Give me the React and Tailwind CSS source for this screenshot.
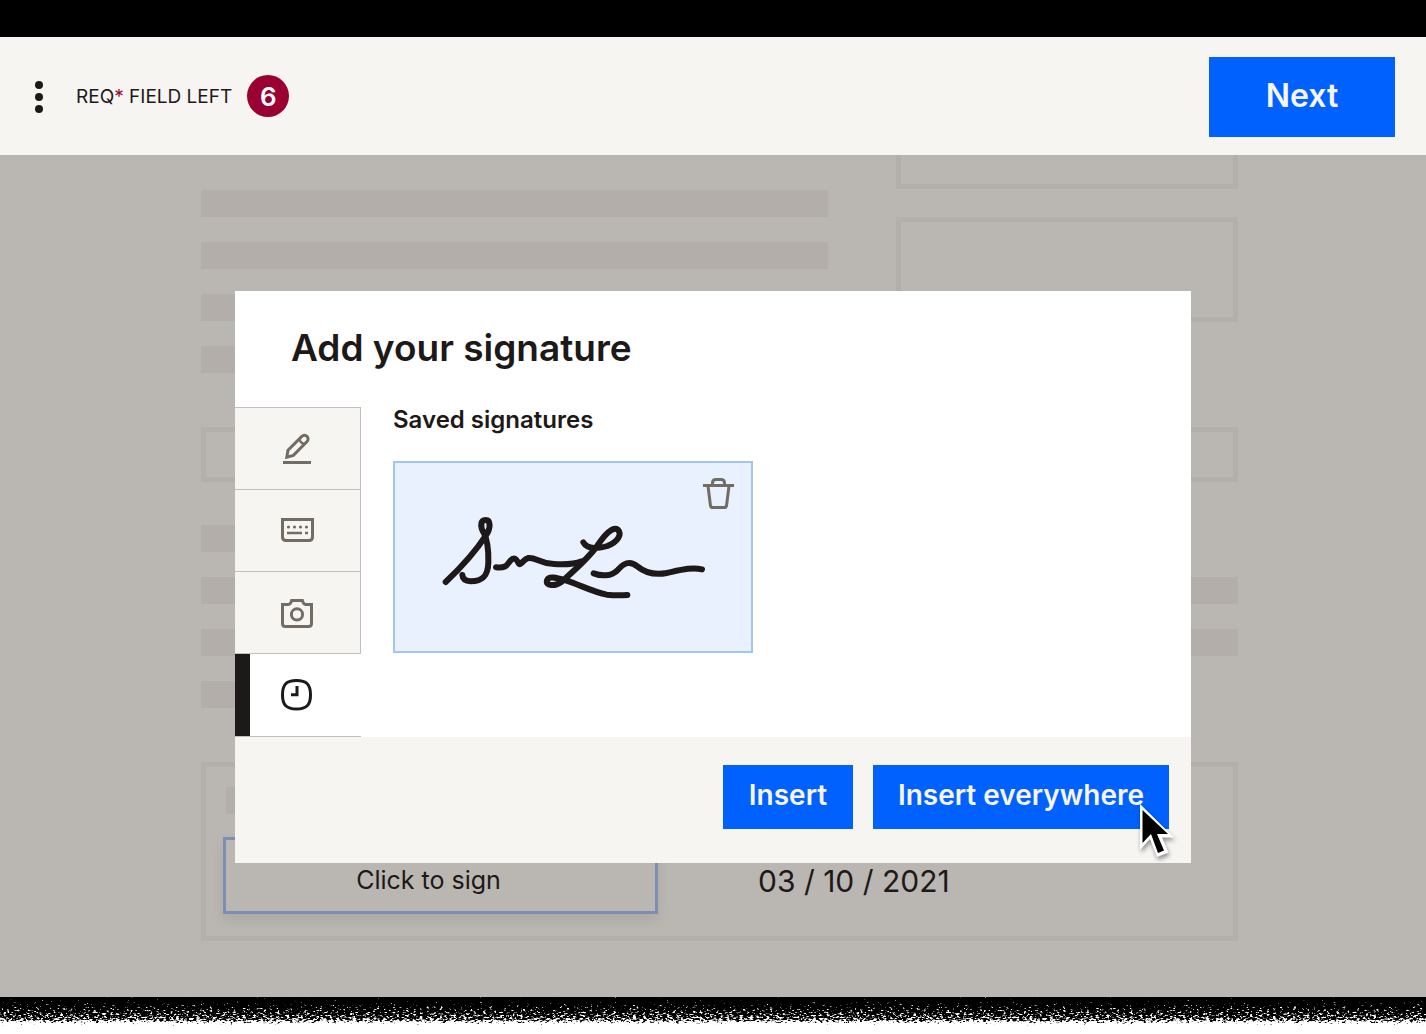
import { useState } from 'react';

const TABS = [
  { id: 'draw', label: 'Draw', Icon: PencilIcon },
  { id: 'type', label: 'Type', Icon: KeyboardIcon },
  { id: 'photo', label: 'Photo', Icon: CameraIcon },
  { id: 'saved', label: 'Saved signatures', Icon: ClockIcon },
];

function PencilIcon() {
  return (
    <svg viewBox="0 0 34 34" className="w-[34px] h-[34px]" fill="none" stroke="currentColor" strokeWidth="3" aria-hidden="true">
      <path d="M3 30.5H31" />
      <path d="M6.8 25.2L8 18.2L21.6 4.6C23.4 2.8 25.6 3 27 4.4C28.4 5.8 28.6 8 26.8 9.8L13.4 23.4Z" />
      <path d="M19.4 7C20 10 21.4 11.4 24.6 12" strokeWidth="2.4" />
    </svg>
  );
}

function KeyboardIcon() {
  return (
    <svg viewBox="0 0 34 34" className="w-[34px] h-[34px]" fill="none" stroke="currentColor" strokeWidth="3" aria-hidden="true">
      <path d="M2.5 5.5H32.5V23C32.5 25.2 31.4 26.5 29 26.5H6C3.6 26.5 2.5 25.2 2.5 23Z" />
      <path d="M7 19H22M25 19H28" strokeWidth="2.6" />
      <g fill="currentColor" stroke="none">
        <circle cx="8.5" cy="13" r="1.6" />
        <circle cx="14.5" cy="13" r="1.6" />
        <circle cx="20.5" cy="13" r="1.6" />
        <circle cx="26.5" cy="13" r="1.6" />
      </g>
    </svg>
  );
}

function CameraIcon() {
  return (
    <svg viewBox="0 0 34 34" className="w-[34px] h-[34px]" fill="none" stroke="currentColor" strokeWidth="3" aria-hidden="true">
      <path d="M2.5 8.5H8.5C10.6 8.5 11 7 11.6 4.5H22.4C23 7 23.4 8.5 25.5 8.5H31.5V27.5C31.5 29.6 30.6 30.5 28.5 30.5H5.5C3.4 30.5 2.5 29.6 2.5 27.5Z" />
      <circle cx="17" cy="18.4" r="5.6" />
    </svg>
  );
}

function ClockIcon() {
  return (
    <svg viewBox="0 0 34 34" className="w-[34px] h-[34px]" fill="none" stroke="currentColor" strokeWidth="3" aria-hidden="true">
      <path d="M16.5 2.5C26.5 2.5 30.5 6.5 30.5 17C30.5 27 26.5 31 16.5 31C6.5 31 2.5 27 2.5 17C2.5 6.5 6.5 2.5 16.5 2.5Z" />
      <path d="M17 8V16.8H11" />
    </svg>
  );
}

function TrashIcon() {
  return (
    <svg viewBox="0 0 34 34" className="w-[34px] h-[34px]" fill="none" stroke="currentColor" strokeWidth="3" aria-hidden="true">
      <path d="M1 9.5H32" />
      <path d="M10.5 9V7C10.5 4.5 11.5 3.5 14 3.5H19C21.5 3.5 22.5 4.5 22.5 7V9" />
      <path d="M6 10L8.4 29C8.6 31 9.2 31.6 11 31.6H22C23.8 31.6 24.4 31 24.6 29L27 10" />
    </svg>
  );
}

function Signature() {
  return (
    <svg
      viewBox="9 6 900 330"
      className="w-[300px] h-[110px]"
      fill="none"
      stroke="#1e1919"
      strokeWidth="18"
      strokeLinecap="round"
      strokeLinejoin="round"
      role="img"
      aria-label="Saved signature"
    >
      <path d="M77 246C118 207 168 152 198 106C214 82 211 60 197 60C181 60 180 80 191 98C202 118 206 150 205 188C204 226 190 244 152 244C134 243 128 236 127 225" />
      <path d="M228 202C260 206 262 192 271 182C283 169 290 178 296 190C303 199 308 178 325 174C348 171 356 190 402 192C434 194 462 193 485 184" />
      <path d="M490 127C502 149 538 146 562 138C596 124 606 102 594 89C578 78 554 104 530 140C500 180 460 214 424 246C404 260 376 258 381 241C386 226 412 234 440 242C482 256 520 276 560 284C590 287 608 286 622 285" />
      <path d="M521 220C542 228 574 231 594 209C612 188 630 181 652 199C676 219 702 226 740 219C786 209 816 201 846 208" />
    </svg>
  );
}

function Cursor() {
  return (
    <svg
      viewBox="0 0 44 62"
      className="absolute left-[262px] top-[34px] w-[44px] h-[62px] pointer-events-none drop-shadow-[1px_3px_2px_rgba(0,0,0,0.4)]"
      aria-hidden="true"
    >
      <path d="M5 5V51L15 40L22 58L33.5 53.5L27 38.5H39Z" fill="#fff" />
      <path d="M7.5 11V44L16 35L23 54L29 51.5L22 35H33Z" fill="#000" />
    </svg>
  );
}

function Line({ className = '' }) {
  return <div className={`h-[27px] bg-[#b3aea9] ${className}`} />;
}

// Placeholder document shown behind the dialog
function DocumentPreview() {
  return (
    <div className="pl-[201px] pr-[188px]">
      <div className="flex gap-[68px]">
        <div className="flex-1 flex flex-col gap-[25px] pt-[35px]">
          <Line />
          <Line />
          <Line />
          <Line />
        </div>
        <div className="w-[342px] flex flex-col gap-7">
          <div className="h-[34px] border-[5px] border-t-0 border-[#b3afaa]" />
          <div className="h-[105px] border-[5px] border-[#b3afaa]" />
        </div>
      </div>

      <div className="mt-[54px] h-[55px] border-[5px] border-[#b3afaa]" />

      <div className="mt-[43px] flex flex-col gap-[25px]">
        <Line className="w-4/5" />
        <Line />
        <Line />
        <Line className="w-3/5" />
      </div>

      <div className="mt-[54px] h-[179px] border-[5px] border-[#b3afaa] px-[17px] pt-5">
        <Line className="w-[200px] ml-[3px]" />
        <div className="mt-[23px] flex items-center">
          <button
            type="button"
            className="w-[435px] h-[77px] pr-6 pt-2.5 border-[3px] border-[#7d8fb0] text-[25px] text-[#1e1919] shadow-[0_6px_12px_rgba(0,0,0,0.08)]"
          >
            Click to sign
          </button>
          <span className="ml-[100px] pt-3 text-[30px] text-[#1e1919]">03 / 10 / 2021</span>
        </div>
      </div>
    </div>
  );
}

function SignatureDialog() {
  const [active, setActive] = useState('saved');

  return (
    <div role="dialog" aria-labelledby="dialog-title" className="w-[956px] bg-white text-[#1e1919]">
      <h1 id="dialog-title" className="h-[116px] pl-14 pt-8 text-[37px] leading-[50px] font-semibold">
        Add your signature
      </h1>

      <div className="flex">
        <div role="tablist" aria-orientation="vertical" className="w-[126px] flex flex-col border-b border-[#c2c0bc]">
          {TABS.map(({ id, label, Icon }) => (
            <button
              key={id}
              type="button"
              role="tab"
              aria-label={label}
              aria-selected={active === id}
              onClick={() => setActive(id)}
              className={
                active === id
                  ? 'h-[83px] flex items-center border-t border-[#c2c0bc] bg-white text-[#1e1919]'
                  : 'h-[82px] flex items-center border-t border-r border-[#c2c0bc] bg-[#f7f5f2] text-[#736c64]'
              }
            >
              <span className={active === id ? 'w-[15px] self-stretch bg-[#1e1919]' : 'w-[15px]'} />
              <span className="ml-[30px]">
                <Icon />
              </span>
            </button>
          ))}
        </div>

        <div className="pl-8">
          <h2 className="text-[24px] leading-[26px] font-semibold">Saved signatures</h2>
          <div className="relative mt-7 w-[360px] h-[192px] flex items-center justify-center border-2 border-[#a0c6f3] bg-[#e9f1ff]">
            <Signature />
            <button type="button" aria-label="Delete signature" className="absolute right-[15px] top-[13px] text-[#736c64]">
              <TrashIcon />
            </button>
          </div>
        </div>
      </div>

      <div className="h-[126px] flex items-start justify-end gap-5 pt-7 pr-[22px] bg-[#f7f5f2] text-[28px] font-semibold text-[#f7f5f2]">
        <button type="button" className="w-[130px] h-16 pb-1 bg-[#0061fe]">
          Insert
        </button>
        <button type="button" className="relative w-[296px] h-16 pb-1 bg-[#0061fe]">
          Insert everywhere
          <Cursor />
        </button>
      </div>
    </div>
  );
}

// Grainy edge that fades from black to white
function TornEdge() {
  return (
    <svg className="block w-full h-[37px]" aria-hidden="true">
      <defs>
        <linearGradient id="fade" x1="0" y1="0" x2="0" y2="1">
          <stop offset="0" stopColor="#202020" />
          <stop offset="0.3" stopColor="#505050" />
          <stop offset="0.62" stopColor="#7c7c7c" />
          <stop offset="0.8" stopColor="#fff" />
        </linearGradient>
        <filter id="grain" x="0" y="0" width="100%" height="100%" colorInterpolationFilters="sRGB">
          <feTurbulence type="fractalNoise" baseFrequency="0.3 0.6" numOctaves="3" seed="4" />
          <feColorMatrix values="1 0 0 0 0  1 0 0 0 0  1 0 0 0 0  0 0 0 0 1" result="noise" />
          <feComposite in="SourceGraphic" in2="noise" operator="arithmetic" k2="1" k3="1" k4="-0.5" />
          <feComponentTransfer>
            <feFuncR type="linear" slope="6" intercept="-2.6" />
            <feFuncG type="linear" slope="6" intercept="-2.6" />
            <feFuncB type="linear" slope="6" intercept="-2.6" />
            <feFuncA type="linear" slope="8" intercept="0" />
          </feComponentTransfer>
        </filter>
      </defs>
      <rect width="100%" height="100%" fill="url(#fade)" filter="url(#grain)" />
    </svg>
  );
}

export default function App() {
  return (
    <div className="font-['Inter','Liberation_Sans',sans-serif]">
      <div className="h-[37px] bg-black" />

      <header className="h-[118px] flex items-center px-[31px] pt-0.5 bg-[#f7f5f2]">
        <button type="button" aria-label="More options" className="w-4 flex flex-col items-center gap-1">
          <span className="size-2 rounded-full bg-[#1e1919]" />
          <span className="size-2 rounded-full bg-[#1e1919]" />
          <span className="size-2 rounded-full bg-[#1e1919]" />
        </button>
        <p className="ml-[29px] text-[19px] text-[#1e1919]">
          REQ<span className="text-[#9b0032]">*</span> FIELD LEFT
        </p>
        <span className="ml-[15px] mb-0.5 size-[42px] flex items-center justify-center rounded-full bg-[#9b0032] text-[26px] font-semibold text-white">
          6
        </span>
        <button type="button" className="ml-auto w-[186px] h-20 pb-0.5 bg-[#0061fe] text-[32px] font-semibold text-[#f7f5f2]">
          Next
        </button>
      </header>

      <main className="relative h-[842px] bg-[#bab6b1]">
        <DocumentPreview />
        <div className="absolute inset-0 pt-0.5 flex items-center justify-center">
          <SignatureDialog />
        </div>
      </main>

      <TornEdge />
    </div>
  );
}
